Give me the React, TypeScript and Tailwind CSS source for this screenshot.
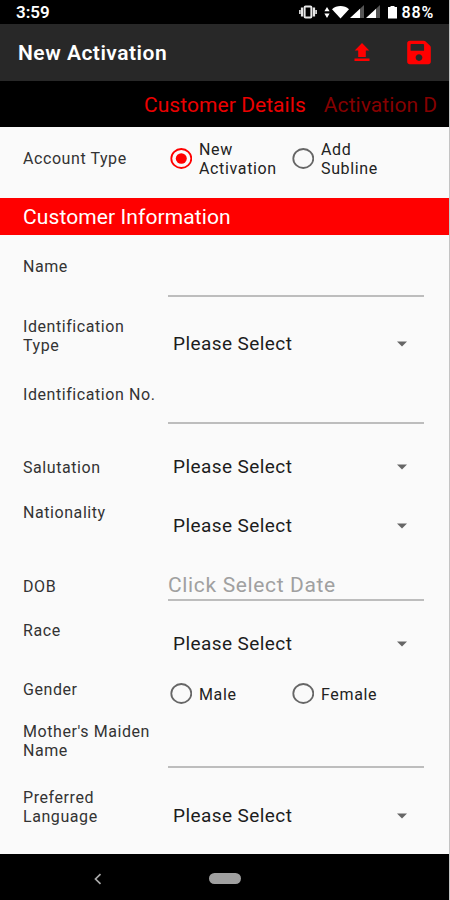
import React, { useState } from 'react';
import { FaSave } from 'react-icons/fa';

function StatusBar() {
  return (
    <div className="flex h-6 items-center justify-between bg-black pl-4 pr-[15px] text-white">
      <span className="text-[17px] font-semibold leading-6">3:59</span>
      <div className="flex items-center">
        <svg className="mr-[7px] h-[14px] w-[18px]" viewBox="0 0 18 14" fill="none" stroke="#e8e8e8">
          <rect x="5.600" y="1.500" width="6.800" height="11" rx="1" strokeWidth="2" />
          <path d="M3 2.500v9M15 2.500v9" strokeWidth="2.200" />
          <path d="M0.900 5v4M17.100 5v4" strokeWidth="1.600" />
        </svg>
        <svg className="h-[13px] w-[6px]" viewBox="0 0 6 13" fill="#fff">
          <path d="M3 1l2.600 4.200H0.400zM3 12L0.400 7.500h5.200z" />
        </svg>
        <svg className="ml-[2px] h-[14px] w-[17px]" viewBox="0 0 17 14" fill="#fff">
          <path d="M8.500 13.600L0 4.200C4.500 0 12.500 0 17 4.200z" />
        </svg>
        <svg className="ml-px h-[14px] w-[14px]" viewBox="0 0 14 14">
          <path d="M14 0v13H9.500V4.200z" fill="#555" />
          <path d="M0 13L10 3.700V13z" fill="#fff" />
        </svg>
        <svg className="ml-[2px] h-[14px] w-[14px]" viewBox="0 0 14 14">
          <path d="M14 0v13H9.500V4.200z" fill="#555" />
          <path d="M0 13L10 3.700V13z" fill="#fff" />
        </svg>
        <svg className="ml-[8px] h-[14px] w-[9px]" viewBox="0 0 9 14" fill="#fff">
          <path d="M2.500 1h4v1H9v11.500H0V2h2.500z" />
        </svg>
        <span className="ml-[5px] pt-px text-[16px] font-semibold leading-6 tracking-[0.8px]">88%</span>
      </div>
    </div>
  );
}

function AppBar() {
  return (
    <header className="flex h-[57px] items-center bg-[#282828] pl-[18px] pr-[18px]">
      <h1 className="flex-1 pt-[3px] text-[21px] font-semibold tracking-[0.5px] text-white">New Activation</h1>
      <button aria-label="Upload" className="mr-[37px] pb-[2px]">
        <svg className="h-[18px] w-4" viewBox="0 0 16 18" fill="#ff0000">
          <path d="M8 0l7.300 7.500H11.800V14H4.200V7.500H0.700zM0.500 15.500h15V18H0.500z" />
        </svg>
      </button>
      <button aria-label="Save">
        <FaSave className="h-[27px] w-6 text-[#ff0000]" />
      </button>
    </header>
  );
}

function Radio({ label, checked, onSelect }: { label: string; checked: boolean; onSelect: () => void }) {
  return (
    <button
      onClick={onSelect}
      className="flex w-[122px] items-center gap-[7px] text-left text-[16px] leading-[19px] tracking-[0.65px] text-[#222]"
    >
      <svg className="h-[22px] w-[22px] shrink-0" viewBox="0 0 22 22" fill="none">
        <ellipse cx="11.300" cy="10.500" rx="10" ry="9.500" stroke={checked ? '#ff0000' : '#666'} strokeWidth="1.800" />
        {checked && <ellipse cx="11.300" cy="10.500" rx="5.500" ry="5.200" fill="#ff0000" />}
      </svg>
      <span className="whitespace-pre-line pt-px">{label}</span>
    </button>
  );
}

function Select() {
  return (
    <div className="flex h-6 items-center justify-between pl-[5px] pr-[17px] text-[19px] tracking-[0.42px] text-[#1c1c1c]">
      <span>Please Select</span>
      <svg className="h-[6px] w-[10px]" viewBox="0 0 10 6" fill="#666">
        <path d="M0 0.500h10L5 5.500z" />
      </svg>
    </div>
  );
}

function Line() {
  return <div className="h-[2px] bg-[#bdbdbd]" />;
}

// row = height of the row, labelPad / fieldPad = space above each side
function Field({ label, row, labelPad, fieldPad, children }: {
  label: string;
  row: string;
  labelPad: string;
  fieldPad: string;
  children: React.ReactNode;
}) {
  return (
    <div className={`flex pl-[23px] pr-[25px] ${row}`}>
      <div className={`w-[145px] shrink-0 whitespace-pre-line text-[16px] leading-[19px] tracking-[0.57px] text-[#333] ${labelPad}`}>
        {label}
      </div>
      <div className={`flex-1 ${fieldPad}`}>{children}</div>
    </div>
  );
}

export default function App() {
  const [account, setAccount] = useState('new');
  const [gender, setGender] = useState('');

  return (
    <div className="flex h-[900px] w-[450px] flex-col overflow-hidden border-r border-[#c4c4c4] bg-[#fafafa] font-[Roboto,sans-serif]">
      <StatusBar />
      <AppBar />

      <nav className="flex h-[46px] items-center gap-[18px] whitespace-nowrap bg-black pl-36 pt-[3px] text-[21px] tracking-[0.06px]">
        <span className="text-[#ec0000]">Customer Details</span>
        <span className="text-[#850000]">Activation D</span>
      </nav>

      <main className="h-[727px]">
        <Field label="Account Type" row="h-[71px]" labelPad="pt-[22px]" fieldPad="pt-[12px]">
          <div className="flex pl-[2px]">
            <Radio label={'New\nActivation'} checked={account === 'new'} onSelect={() => setAccount('new')} />
            <Radio label={'Add\nSubline'} checked={account === 'sub'} onSelect={() => setAccount('sub')} />
          </div>
        </Field>

        <h2 className="h-[37px] bg-[#ff0000] pl-[23px] text-[21px] leading-[39px] tracking-[0.1px] text-white">
          Customer Information
        </h2>

        <Field label="Name" row="h-[72px]" labelPad="pt-[22px]" fieldPad="pt-[60px]">
          <Line />
        </Field>
        <Field label={'Identification\nType'} row="h-[67px]" labelPad="pt-[10px]" fieldPad="pt-[25px]">
          <Select />
        </Field>
        <Field label="Identification No." row="h-[61px]" labelPad="pt-[11px]" fieldPad="pt-[48px]">
          <Line />
        </Field>
        <Field label="Salutation" row="h-[60px]" labelPad="pt-[23px]" fieldPad="pt-[20px]">
          <Select />
        </Field>
        <Field label="Nationality" row="h-[60px]" labelPad="pt-[8px]" fieldPad="pt-[19px]">
          <Select />
        </Field>
        <Field label="DOB" row="h-[55px]" labelPad="pt-[22px]" fieldPad="pt-[18px]">
          <div className="h-[26px] text-[21px] leading-6 tracking-[0.65px] text-[#a0a0a0]">Click Select Date</div>
          <Line />
        </Field>
        <Field label="Race" row="h-[61px]" labelPad="pt-[11px]" fieldPad="pt-[22px]">
          <Select />
        </Field>
        <Field label="Gender" row="h-[45px]" labelPad="pt-[9px]" fieldPad="pt-[12px]">
          <div className="flex pl-[2px]">
            <Radio label="Male" checked={gender === 'm'} onSelect={() => setGender('m')} />
            <Radio label="Female" checked={gender === 'f'} onSelect={() => setGender('f')} />
          </div>
        </Field>
        <Field label={'Mother\'s Maiden\nName'} row="h-[60px]" labelPad="pt-[6px]" fieldPad="pt-[50px]">
          <Line />
        </Field>
        <Field label={'Preferred\nLanguage'} row="h-[77px]" labelPad="pt-[12px]" fieldPad="pt-[28px]">
          <Select />
        </Field>
      </main>

      <footer className="flex h-[46px] items-center bg-black pl-[94px] pt-[3px]">
        <svg className="h-3 w-2" viewBox="0 0 8 12" fill="none" stroke="#aaa" strokeWidth="1.700">
          <path d="M6.500 1.200L1.500 6l5 4.800" />
        </svg>
        <div className="ml-[107px] h-[11px] w-8 rounded-full bg-[#a0a0a0]" />
      </footer>
    </div>
  );
}
